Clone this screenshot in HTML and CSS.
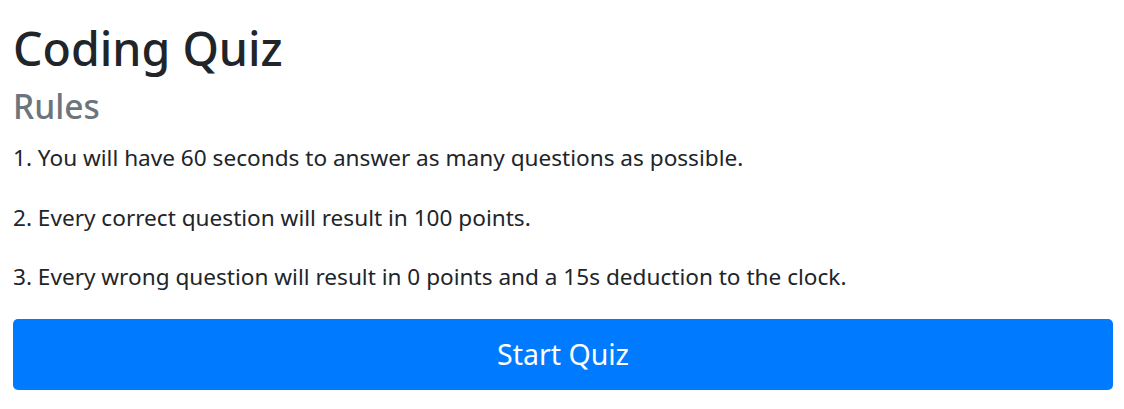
FILE: index.html
```html
<!DOCTYPE html>
<html lang="en">
<head>
<meta charset="utf-8">
<title>Coding Quiz</title>
<link rel="stylesheet" href="styles.css">
</head>
<body>
<main class="quiz">
  <h1 class="title">Coding Quiz</h1>
  <h2 class="subtitle">Rules</h2>
  <p class="rule">1. You will have 60 seconds to answer as many questions as possible.</p>
  <p class="rule">2. Every correct question will result in 100 points.</p>
  <p class="rule">3. Every wrong question will result in 0 points and a 15s deduction to the clock.</p>
  <button class="start-btn" type="button">Start Quiz</button>
</main>
</body>
</html>
```
FILE: styles.css
```css
html, body {
  margin: 0;
  padding: 0;
  background: #fff;
}
body {
  font-family: "Noto Sans", "Open Sans", sans-serif;
  color: #212529;
}
.quiz {
  padding: 18px 11px 0 13px;
  display: flex;
  flex-direction: column;
}
.title {
  margin: 0;
  font-size: 46.5px;
  font-weight: 500;
  line-height: 60px;
}
.subtitle {
  margin: 5px 0 11px;
  font-size: 33.5px;
  font-weight: 500;
  line-height: 46px;
  color: #6c757d;
}
.rule {
  margin: 0 0 23.5px;
  font-size: 22.6px;
  line-height: 36px;
}
.start-btn {
  margin-top: 0;
  height: 71px;
  border: none;
  border-radius: 5px;
  background: #007bff;
  color: #fff;
  font-family: inherit;
  font-size: 28.5px;
}
```
